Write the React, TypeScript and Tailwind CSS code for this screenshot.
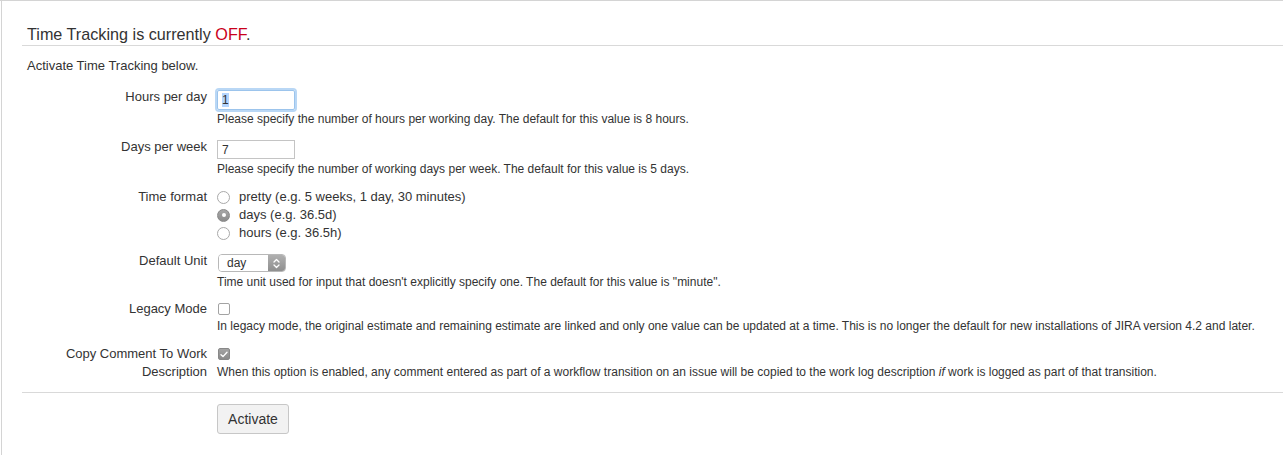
import React from 'react';

const font = { fontFamily: '"Liberation Sans", Arial, sans-serif' };

const Radio: React.FC<{ checked?: boolean; label: string }> = ({ checked, label }) => (
  <div className="flex items-center h-[18px]">
    {checked ? (
      <span className="w-[13px] h-[13px] rounded-full bg-gradient-to-b from-[#a8a8a8] to-[#8c8c8c] border border-[#888] flex items-center justify-center">
        <span className="w-[4px] h-[4px] rounded-full bg-white" />
      </span>
    ) : (
      <span className="w-[13px] h-[13px] rounded-full bg-white border border-[#a9a9a9]" />
    )}
    <span className="ml-[9px] text-[13px]">{label}</span>
  </div>
);

const Row: React.FC<{ label: React.ReactNode; className?: string; children: React.ReactNode }> = ({ label, className, children }) => (
  <div className={'flex ' + (className || '')}>
    <div className="w-[185px] shrink-0 text-right text-[13px] leading-[18px]">{label}</div>
    <div className="ml-[10px] flex-1 min-w-0">{children}</div>
  </div>
);

export default function App() {
  return (
    <div className="bg-white w-[1283px] h-[455px] text-[#333] overflow-hidden" style={font}>
      <div className="border-t border-[#d4d4d4] h-full">
        <div className="ml-px border-l border-[#d4d4d4] h-full pl-[20px]">
          {/* Heading */}
          <div className="pt-[23px] pb-px border-b border-[#d9d9d9]">
            <h2 className="pl-[5px] text-[16.2px] leading-[20px] font-normal">
              Time Tracking is currently <span className="text-[#c9001b]">OFF</span>.
            </h2>
          </div>

          <p className="mt-[11px] pl-[5px] text-[13px] leading-[18px]">Activate Time Tracking below.</p>

          {/* Hours per day */}
          <Row label="Hours per day" className="mt-[13px]">
            <div className="mt-[2px] w-[78px] h-[20px] border border-[#9cc4ec] rounded-[2px] shadow-[0_0_0_2px_#b9d7f5] flex items-center pl-[4px] text-[12px]">
              <span className="bg-[#b4d5fe] leading-[14px]">1</span>
            </div>
            <p className="mt-[1px] text-[12px] leading-[16px]">
              Please specify the number of hours per working day. The default for this value is 8 hours.
            </p>
          </Row>

          {/* Days per week */}
          <Row label="Days per week" className="mt-[11px]">
            <div className="mt-[2px] w-[78px] h-[19px] border border-[#c4c4c4] flex items-center pl-[4px] text-[12px]">7</div>
            <p className="mt-[2px] text-[12px] leading-[16px]">
              Please specify the number of working days per week. The default for this value is 5 days.
            </p>
          </Row>

          {/* Time format */}
          <Row label="Time format" className="mt-[11px]">
            <Radio label="pretty (e.g. 5 weeks, 1 day, 30 minutes)" />
            <Radio checked label="days (e.g. 36.5d)" />
            <Radio label="hours (e.g. 36.5h)" />
          </Row>

          {/* Default Unit */}
          <Row label="Default Unit" className="mt-[10px]">
            <div className="mt-[2px] ml-px w-[68px] h-[18px] flex rounded-[4px] border border-[#b8b8b8] overflow-hidden text-[12px]">
              <div className="flex-1 bg-white flex items-center pl-[8px] leading-none">day</div>
              <div className="w-[17px] bg-gradient-to-b from-[#b0b0b0] to-[#8f8f8f] flex items-center justify-center">
                <svg width="7" height="11" viewBox="0 0 7 11" fill="none" stroke="white" strokeWidth="1.3" strokeLinecap="round" strokeLinejoin="round">
                  <path d="M1 4 L3.5 1.5 L6 4" />
                  <path d="M1 7 L3.5 9.5 L6 7" />
                </svg>
              </div>
            </div>
            <p className="mt-[2px] text-[12px] leading-[16px]">
              Time unit used for input that doesn't explicitly specify one. The default for this value is "minute".
            </p>
          </Row>

          {/* Legacy Mode */}
          <Row label="Legacy Mode" className="mt-[10px]">
            <div className="mt-[3px] ml-px w-[12px] h-[12px] rounded-[2px] border border-[#a3a3a3] bg-white" />
            <p className="mt-[3px] text-[12px] leading-[16px]">
              In legacy mode, the original estimate and remaining estimate are linked and only one value can be updated at a time. This is no longer the default for new installations of JIRA version 4.2 and later.
            </p>
          </Row>

          {/* Copy Comment */}
          <Row label="Copy Comment To Work Description" className="mt-[11px]">
            <div className="mt-[3px] ml-px w-[12px] h-[12px] rounded-[2px] border border-[#888] bg-gradient-to-b from-[#a3a3a3] to-[#8a8a8a] flex items-center justify-center">
              <svg width="8" height="7" viewBox="0 0 8 7" fill="none" stroke="white" strokeWidth="1.4" strokeLinecap="round" strokeLinejoin="round">
                <path d="M1 3.8 L3 5.6 L7 1.2" />
              </svg>
            </div>
            <p className="mt-[3px] text-[12px] leading-[18px]">
              When this option is enabled, any comment entered as part of a workflow transition on an issue will be copied to the work log description <i>if</i> work is logged as part of that transition.
            </p>
          </Row>

          {/* Divider + button */}
          <div className="mt-[11px] border-t border-[#d9d9d9]">
            <div className="pl-[195px] pt-[11px]">
              <button className="w-[72px] h-[30px] rounded-[3px] border border-[#c7c7c7] bg-[#f2f2f2] text-[14px] text-[#333]">
                Activate
              </button>
            </div>
          </div>
        </div>
      </div>
    </div>
  );
}
